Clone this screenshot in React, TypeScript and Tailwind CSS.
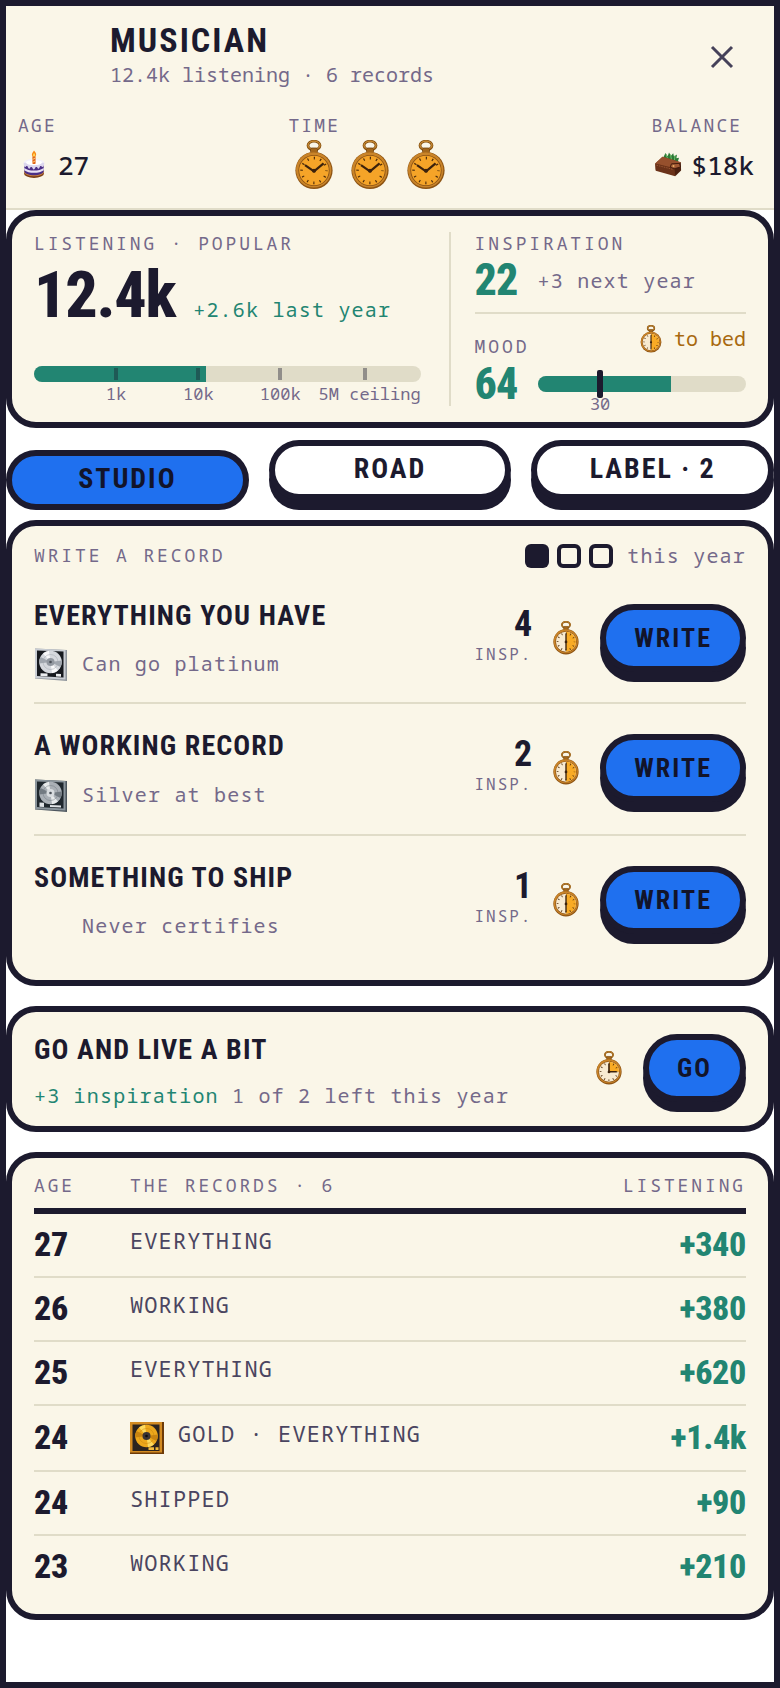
import React, { useState } from 'react';

type DialKind = 'full' | 'half' | 'quarter';
type DiscKind = 'platinum' | 'silver' | 'gold';

interface RecordOption {
  title: string;
  note: string;
  cost: number;
  disc?: DiscKind;
}

interface PastRecord {
  age: number;
  name: string;
  gain: string;
  disc?: DiscKind;
}

const TABS = ['STUDIO', 'ROAD', 'LABEL · 2'];

const OPTIONS: RecordOption[] = [
  { title: 'EVERYTHING YOU HAVE', note: 'Can go platinum', cost: 4, disc: 'platinum' },
  { title: 'A WORKING RECORD', note: 'Silver at best', cost: 2, disc: 'silver' },
  { title: 'SOMETHING TO SHIP', note: 'Never certifies', cost: 1 },
];

const RECORDS: PastRecord[] = [
  { age: 27, name: 'EVERYTHING', gain: '+340' },
  { age: 26, name: 'WORKING', gain: '+380' },
  { age: 25, name: 'EVERYTHING', gain: '+620' },
  { age: 24, name: 'GOLD · EVERYTHING', gain: '+1.4k', disc: 'gold' },
  { age: 24, name: 'SHIPPED', gain: '+90' },
  { age: 23, name: 'WORKING', gain: '+210' },
];

const TICKS = [
  { label: '1k', at: 21.2 },
  { label: '10k', at: 42.5 },
  { label: '100k', at: 63.7 },
];

const DISPLAY = "font-['Roboto_Condensed','Roboto',sans-serif] font-bold";
const STAT = "font-['Roboto_Condensed','Roboto',sans-serif] font-extrabold tracking-[-0.02em]";
const CELL_NUM = "font-['Roboto_Condensed','Roboto',sans-serif] font-extrabold tracking-[-0.01em] border-b-2 border-[#e0dcc8] pt-2.5 pb-3 text-[34px] leading-10";
const LABEL = 'text-[18px] leading-[22px] pb-0.5 tracking-[0.16em] text-[#74698a]';
const HUD_LABEL = 'text-[18px] leading-[22px] pb-0.5 tracking-[0.12em] text-[#74698a]';
const NOTE = 'text-[20px] leading-7 tracking-[0.06em]';
const CARD = 'bg-[#faf6e8] border-6 border-[#1c1a2e] rounded-[30px] px-[22px]';

/* Pocket watch, the lit part of the dial is the share of time it costs */
const Watch: React.FC<{ kind: DialKind; className: string }> = ({ kind, className }) => (
  <svg viewBox="0 0 40 50" className={className} aria-hidden="true">
    <ellipse cx="20" cy="5.6" rx="6" ry="4.4" fill="none" stroke="#8a5514" strokeWidth="2.8" />
    <ellipse cx="20" cy="5.3" rx="6" ry="4.2" fill="none" stroke="#d99a3c" strokeWidth="1" />
    <rect x="16.5" y="8" width="7" height="5" rx="1.5" fill="#a4671b" stroke="#6f410d" strokeWidth="0.8" />
    <circle cx="20" cy="30.5" r="18.6" fill="#8d5312" />
    <circle cx="19.7" cy="29.9" r="17.7" fill="#c98429" />
    <circle cx="20" cy="30.5" r="15.6" fill="#8a5115" />
    <circle cx="20" cy="30.5" r="14.8" fill={kind === 'full' ? '#f5a428' : '#f8ead0'} />
    {kind === 'half' && <path d="M20 15.7a14.8 14.8 0 0 1 0 29.6z" fill="#f9ab25" />}
    {kind === 'quarter' && <path d="M20 15.7a14.8 14.8 0 0 1 14.8 14.8H20z" fill="#f9ab25" />}
    <circle cx="20" cy="30.5" r="12.4" fill="none" stroke="#4d2c0b" strokeWidth="2.6" strokeDasharray="1.2 5.293" strokeDashoffset="0.6" />
    {kind === 'full' && (
      <path d="m11 25.2 9 6.2 9.6-8" fill="none" stroke="#3c220c" strokeWidth="2.2" strokeLinejoin="round" />
    )}
    {kind === 'half' && <path d="M20 18.5v24" stroke="#3c220c" strokeWidth="2" />}
    {kind === 'quarter' && <path d="M20 18.5v12h11.5" fill="none" stroke="#3c220c" strokeWidth="2.4" />}
    <circle cx="20" cy="30.8" r="2" fill="#3c220c" />
  </svg>
);

const Cake = () => (
  <svg viewBox="0 0 32 32" className="size-8" aria-hidden="true">
    <ellipse cx="16" cy="24.5" rx="10" ry="4.4" fill="#7a3d17" />
    <ellipse cx="16" cy="23" rx="10" ry="4.2" fill="#c9813c" />
    <path d="M6.3 14h19.4v8c0 2.6-4.4 4.2-9.7 4.2S6.3 24.6 6.3 22z" fill="#4b2f87" />
    <path d="M6.3 19c4 3.4 15.4 3.4 19.4 0v2.2c-4 3.4-15.4 3.4-19.4 0z" fill="#e9e2f5" />
    <ellipse cx="16" cy="13.8" rx="10.3" ry="4" fill="#f4f1fb" />
    <path d="M5.7 13.8c0 3 .6 4.2 1.5 4.2s1-1.6 1.9-1.2.9 3 2 3 1.1-2 2.2-2 1.2 2.6 2.5 2.6 1.3-2.6 2.5-2.6 1.1 2 2.2 2 1-2.6 2-3 1 1.2 1.9 1.2 1.9-1.2 1.9-4.2z" fill="#dcd6ee" />
    <ellipse cx="16" cy="13.6" rx="8" ry="2.6" fill="#fff" />
    <rect x="14.4" y="7" width="3.2" height="8" rx="0.8" fill="#e0641c" />
    <path d="m14.4 10.5 3.2-1.6M14.4 13.4l3.2-1.6" stroke="#ffd27a" strokeWidth="0.9" />
    <path d="M16 1.5c2 2.3 2.3 3.4 2.1 4.4-.3 1.3-1.2 1.9-2.1 1.9s-1.9-.6-2.1-1.9c-.1-1 .6-2.3 2.1-4.4z" fill="#f98a14" />
    <path d="M16 4c.9 1.2 1 2 .9 2.6-.2.6-.5.8-.9.8s-.8-.2-.9-.8.2-1.5.9-2.6z" fill="#ffe36b" />
  </svg>
);

const Wallet = () => (
  <svg viewBox="0 0 32 32" className="size-8" aria-hidden="true">
    <path d="M10 11 13.5 4l2.2 3.2L17 3.5l2 3.3 2.2-2.6.8 3.4 3-2-.6 3.6 2.6-.4-1.5 5z" fill="#2c7a36" />
    <path d="m14 5.5 2 5M18.5 5.5l1 5.5M23 6.5 22.5 11" stroke="#6fc06a" strokeWidth="1" />
    <path d="M3.2 14.5 10.5 7.8l18.3 5.4-5.6 13.3-19.5-5.8z" fill="#7c3f22" />
    <path d="M3.2 14.5 10.5 7.8l18.3 5.4-6.4 6.1z" fill="#96502d" />
    <path d="m3.2 14.5 19.2 4.8.8 7.9L3.7 21.8z" fill="#6b3219" />
    <path d="m22.4 19.3 6.4-6.1.3 8.3-5.9 5.7z" fill="#4b200f" />
    <path d="m19.5 14.8 8-.4 1 3.6-6.5 1.8-3.8-1.7z" fill="#a25a34" stroke="#3e190b" strokeWidth="0.9" />
    <circle cx="21.5" cy="17" r="1" fill="#e8b066" />
    <path d="m4.5 16.2 17 4.3" stroke="#a9633c" strokeWidth="0.7" strokeDasharray="1.5 1" />
  </svg>
);

const DISC_COLORS = {
  platinum: { edge: '#8f959c', frame: '#c9cdd3', mat: '#16191e', disc: '#d5d8dd', shine: '#ffffff', shade: '#a0a6ae', hub: '#9298a0', plate: '#eceef0' },
  silver: { edge: '#4d565e', frame: '#8b959c', mat: '#1f272d', disc: '#aab0b6', shine: '#f2f4f5', shade: '#737b82', hub: '#d8dcdf', plate: '#dfe3e6' },
  gold: { edge: '#6d3a08', frame: '#d38b22', mat: '#2c241f', disc: '#eda81b', shine: '#ffe36a', shade: '#c98410', hub: '#3a3434', plate: '#f3bb3a' },
};

/* Certified disc in a wall frame */
const Disc: React.FC<{ kind: DiscKind }> = ({ kind }) => {
  const c = DISC_COLORS[kind];
  const outer = kind === 'gold' ? 'M0 1h34v32H0z' : 'M1 1.5 33 3v31L1 31.5z';
  const mid = kind === 'gold' ? 'M0 1h32v30.5H0z' : 'M1 1.5 31.5 3v29.5L1 31z';
  const inner = kind === 'gold' ? 'M2.5 3.5h27V30h-27z' : 'M3 3.5 29.5 4.5v26L3 29z';
  return (
    <svg viewBox="0 0 34 34" className="size-[34px] shrink-0" aria-hidden="true">
      <path d={outer} fill={c.edge} />
      <path d={mid} fill={c.frame} />
      <path d={inner} fill={c.mat} />
      <circle cx="16.5" cy="15" r="11.3" fill={c.disc} />
      <path d="M16.5 15 9 6.5a11.3 11.3 0 0 1 6-2.7zM16.5 15l7.5 8.5a11.3 11.3 0 0 1-6 2.7z" fill={c.shine} opacity="0.85" />
      <path d="m16.5 15 11.2-1.5a11.3 11.3 0 0 1-1.2 6.6zM16.5 15 5.3 16.5a11.3 11.3 0 0 1 1.2-6.6z" fill={c.shade} />
      <circle cx="16.5" cy="15" r="7.5" fill="none" stroke={c.shade} strokeWidth="0.5" />
      <circle cx="16.5" cy="15" r="4" fill={c.hub} />
      <circle cx="16.5" cy="15" r="1.3" fill={kind === 'gold' ? '#0f0d0d' : '#4a5057'} />
      {kind === 'platinum' && <path d="m6.5 26.2 7 .3v2.8l-7-.3zM22 26.7l5 .2v2.8l-5-.2z" fill={c.plate} />}
      {kind === 'silver' && <path d="m5.5 24.5 4.5.2V29l-4.5-.2zM16 27l11 .4v2l-11-.4z" fill={c.plate} />}
      {kind === 'gold' && <path d="M18.5 26.2H24V29h-5.5zM25.5 26.2h3V29h-3z" fill={c.plate} />}
    </svg>
  );
};

const PushButton: React.FC<{ children: React.ReactNode }> = ({ children }) => (
  <button
    type="button"
    className={`${DISPLAY} h-[68px] shrink-0 rounded-[34px] border-6 border-[#1c1a2e] bg-[#1f70ef] px-7 text-[26px] tracking-[0.08em] text-[#12142a] shadow-[0_10px_0_#1c1a2e]`}
  >
    {children}
  </button>
);

const App: React.FC = () => {
  const [tab, setTab] = useState('STUDIO');

  return (
    <div className="min-h-screen border-6 border-[#1c1a2e] bg-white font-['Noto_Sans_Mono','DejaVu_Sans_Mono',monospace] text-[#1c1a2e]">
      {/* Header */}
      <header className="border-b-2 border-[#e0dcc8] bg-[#faf6e8] pt-3.5 pb-4">
        <div className="flex items-start justify-between pl-26 pr-3">
          <div>
            <h1 className={`${DISPLAY} text-[34px] leading-10 tracking-[0.06em]`}>MUSICIAN</h1>
            <p className="text-[20px] leading-[30px] text-[#74698a]">12.4k listening · 6 records</p>
          </div>
          <button type="button" aria-label="Close" className="flex h-[74px] w-20 items-center justify-center">
            <svg viewBox="0 0 24 24" className="size-6" aria-hidden="true">
              <path d="m2 2 20 20M22 2 2 22" stroke="#454159" strokeWidth="3" />
            </svg>
          </button>
        </div>

        <div className="mt-5 flex justify-between pl-3 pr-5">
          <div>
            <div className={HUD_LABEL}>AGE</div>
            <div className="flex h-[54px] items-center gap-2">
              <Cake />
              <span className="text-[26px] leading-9 font-medium">27</span>
            </div>
          </div>
          <div>
            <div className={HUD_LABEL}>TIME</div>
            <div className="flex h-[54px] items-center gap-1">
              <Watch kind="full" className="h-[50px] w-[52px]" />
              <Watch kind="full" className="h-[50px] w-[52px]" />
              <Watch kind="full" className="h-[50px] w-[52px]" />
            </div>
          </div>
          <div>
            <div className={HUD_LABEL}>BALANCE</div>
            <div className="flex h-[54px] items-center gap-2">
              <Wallet />
              <span className="text-[26px] leading-9 font-medium">$18k</span>
            </div>
          </div>
        </div>
      </header>

      <main>
        {/* Listening, inspiration and mood */}
        <section className={`${CARD} grid grid-cols-[1.3fr_1fr] gap-7 py-4`}>
          <div>
            <div className={LABEL}>LISTENING · POPULAR</div>
            <div className="mt-2 flex items-baseline gap-[18px]">
              <span className={`${STAT} text-[64px] leading-16`}>12.4k</span>
              <span className={`${NOTE} text-[#228572]`}>+2.6k last year</span>
            </div>
            <div className="relative mt-[38px] h-4 overflow-hidden rounded-full bg-[#e0dcc8]">
              <div className="h-full w-[44.5%] bg-[#228572]" />
              {[...TICKS.map(t => t.at), 85.5].map(at => (
                <div key={at} className="absolute top-0.5 h-3 w-1 -translate-x-1/2 bg-[#1c1a2e]/40" style={{ left: `${at}%` }} />
              ))}
            </div>
            <div className="relative h-6 text-right text-[17px] leading-6 text-[#74698a]">
              {TICKS.map(t => (
                <span key={t.label} className="absolute -translate-x-1/2" style={{ left: `${t.at}%` }}>{t.label}</span>
              ))}
              5M ceiling
            </div>
          </div>

          <div className="border-l-2 border-[#e0dcc8] pl-6">
            <div className={LABEL}>INSPIRATION</div>
            <div className="flex items-center gap-5 border-b-2 border-[#e0dcc8] pt-0.5 pb-2.5">
              <span className={`${STAT} text-[44px] leading-11 text-[#228572]`}>22</span>
              <span className={`${NOTE} pt-0.5 text-[#74698a]`}>+3 next year</span>
            </div>
            <div className="flex h-[45px] justify-between pt-[11px]">
              <span className={`${LABEL} self-end`}>MOOD</span>
              <button type="button" className="flex items-center gap-2.5 self-start text-[20px] leading-7 text-[#a8690f]">
                <Watch kind="half" className="h-7 w-[26px]" />
                to bed
              </button>
            </div>
            <div className="flex items-center gap-5 pt-[3px]">
              <span className={`${STAT} text-[44px] leading-11 text-[#228572]`}>64</span>
              <div className="relative h-4 flex-1">
                <div className="h-full overflow-hidden rounded-full bg-[#e0dcc8]">
                  <div className="h-full w-[64%] bg-[#228572]" />
                </div>
                <div className="absolute -top-1.5 left-[30%] h-7 w-1.5 -translate-x-1/2 rounded-xs bg-[#1c1a2e]" />
                <span className="absolute top-4 left-[30%] -translate-x-1/2 text-[17px] leading-6 text-[#74698a]">30</span>
              </div>
            </div>
          </div>
        </section>

        {/* Tabs */}
        <nav className="mt-3 flex h-[70px] gap-5">
          {TABS.map(t => (
            <button
              key={t}
              type="button"
              aria-pressed={tab === t}
              onClick={() => setTab(t)}
              className={`${DISPLAY} h-[60px] flex-1 rounded-[30px] border-6 border-[#1c1a2e] pb-0.5 text-[28px] tracking-[0.07em] ${tab === t ? 'mt-2.5 bg-[#1f70ef] text-[#12142a]' : 'bg-white shadow-[0_10px_0_#1c1a2e]'}`}
            >
              {t}
            </button>
          ))}
        </nav>

        {/* Write a record */}
        <section className={`${CARD} mt-2.5 py-4`}>
          <div className="mb-1 flex h-7 items-center justify-between">
            <h2 className={LABEL}>WRITE A RECORD</h2>
            <div className="flex items-center gap-2">
              <span className="size-6 rounded-md bg-[#1c1a2e]" />
              <span className="size-6 rounded-md border-4 border-[#1c1a2e]" />
              <span className="size-6 rounded-md border-4 border-[#1c1a2e]" />
              <span className={`${NOTE} ml-1.5 text-[#74698a]`}>this year</span>
            </div>
          </div>
          {OPTIONS.map(o => (
            <div key={o.title} className="flex items-start justify-between border-b-2 border-[#e0dcc8] pt-6 pb-5 last:border-b-0">
              <div>
                <h3 className={`${DISPLAY} text-[28px] leading-9 tracking-[0.04em]`}>{o.title}</h3>
                <div className={`mt-3 flex items-center gap-3.5 ${o.disc === 'silver' ? 'h-[38px]' : 'h-9'}`}>
                  {o.disc ? <Disc kind={o.disc} /> : <span className="w-[34px]" />}
                  <span className={`${NOTE} text-[#74698a]`}>{o.note}</span>
                </div>
              </div>
              <div className="flex h-20 items-center gap-[18px]">
                <div className="pb-1 text-right">
                  <div className={`${DISPLAY} text-[36px] leading-9`}>{o.cost}</div>
                  <div className="text-[16px] leading-6 tracking-[0.12em] text-[#74698a]">INSP.</div>
                </div>
                <Watch kind="half" className="h-[34px] w-8 shrink-0" />
                <PushButton>WRITE</PushButton>
              </div>
            </div>
          ))}
        </section>

        {/* Go and live */}
        <section className={`${CARD} mt-5 flex items-start justify-between pt-[18px] pb-4`}>
          <div>
            <h3 className={`${DISPLAY} text-[28px] leading-10 tracking-[0.04em]`}>GO AND LIVE A BIT</h3>
            <p className={`${NOTE} mt-3 text-[#74698a]`}>
              <span className="text-[#228572]">+3 inspiration</span> 1 of 2 left this year
            </p>
          </div>
          <div className="flex h-[76px] items-center gap-[18px]">
            <Watch kind="quarter" className="h-[34px] w-8 shrink-0" />
            <PushButton>GO</PushButton>
          </div>
        </section>

        {/* Past records */}
        <section className={`${CARD} mt-5 py-4`}>
          <table className="w-full border-separate border-spacing-0 text-left">
            <thead>
              <tr className="text-[18px] leading-[22px] tracking-[0.16em] text-[#74698a]">
                <th className="w-24 border-b-6 border-[#1c1a2e] pb-3 font-normal">AGE</th>
                <th className="border-b-6 border-[#1c1a2e] pb-3 font-normal">THE RECORDS · 6</th>
                <th className="border-b-6 border-[#1c1a2e] pb-3 text-right font-normal">LISTENING</th>
              </tr>
            </thead>
            <tbody className="[&>tr:last-child>td]:border-b-0">
              {RECORDS.map((r, idx) => (
                <tr key={idx}>
                  <td className={CELL_NUM}>{r.age}</td>
                  <td className="border-b-2 border-[#e0dcc8] text-[22px] tracking-wider text-[#4a4560]">
                    <div className={`flex items-center gap-3.5 ${r.disc ? 'h-16' : ''}`}>
                      {r.disc && <Disc kind={r.disc} />}
                      <span className="pb-2.5 leading-[30px]">{r.name}</span>
                    </div>
                  </td>
                  <td className={`${CELL_NUM} text-right text-[#228572]`}>{r.gain}</td>
                </tr>
              ))}
            </tbody>
          </table>
        </section>
      </main>
    </div>
  );
};

export default App;
